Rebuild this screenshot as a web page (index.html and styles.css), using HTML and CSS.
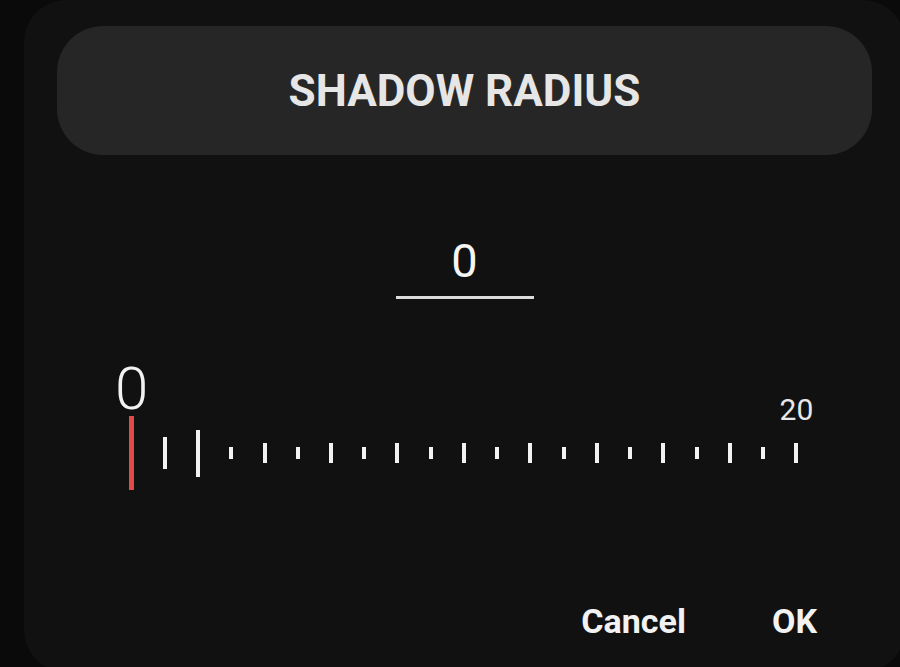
FILE: index.html
```html
<!DOCTYPE html>
<html lang="en">
<head>
  <meta charset="UTF-8" />
  <meta name="viewport" content="width=device-width, initial-scale=1.0" />
  <title>Shadow Radius</title>
  <link rel="stylesheet" href="styles.css">
</head>
<body>

  <div class="dialog">
    <div class="dialog-title">SHADOW RADIUS</div>

    <div class="value-box">
      <div class="value">0</div>
      <div class="value-line"></div>
    </div>

    <div class="ruler">
      <div class="ruler-labels">
        <div class="label label-min">0</div>
        <div class="label label-max">20</div>
      </div>
      <div class="ticks">
        <div class="slot"><span class="tick tick-current"></span></div>
        <div class="slot"><span class="tick tick-near"></span></div>
        <div class="slot"><span class="tick tick-big"></span></div>
        <div class="slot"><span class="tick tick-small"></span></div>
        <div class="slot"><span class="tick tick-mid"></span></div>
        <div class="slot"><span class="tick tick-small"></span></div>
        <div class="slot"><span class="tick tick-mid"></span></div>
        <div class="slot"><span class="tick tick-small"></span></div>
        <div class="slot"><span class="tick tick-mid"></span></div>
        <div class="slot"><span class="tick tick-small"></span></div>
        <div class="slot"><span class="tick tick-mid"></span></div>
        <div class="slot"><span class="tick tick-small"></span></div>
        <div class="slot"><span class="tick tick-mid"></span></div>
        <div class="slot"><span class="tick tick-small"></span></div>
        <div class="slot"><span class="tick tick-mid"></span></div>
        <div class="slot"><span class="tick tick-small"></span></div>
        <div class="slot"><span class="tick tick-mid"></span></div>
        <div class="slot"><span class="tick tick-small"></span></div>
        <div class="slot"><span class="tick tick-mid"></span></div>
        <div class="slot"><span class="tick tick-small"></span></div>
        <div class="slot"><span class="tick tick-mid"></span></div>
      </div>
    </div>

    <div class="dialog-buttons">
      <button class="text-button cancel">Cancel</button>
      <button class="text-button">OK</button>
    </div>
  </div>

</body>
</html>
```

FILE: styles.css
```css
body {
  margin: 0;
  height: 667px;
  overflow: hidden;
  background: #0a0a0a;
  font-family: Roboto, "Noto Sans", "Liberation Sans", sans-serif;
  color: #f2f2f2;
}

.dialog {
  margin-left: 24px;
  width: 881px;
  height: 672px;
  box-sizing: border-box;
  padding: 26px 33px 0;
  background: #111111;
  border-radius: 42px;
}

.dialog-title {
  height: 129px;
  display: flex;
  align-items: center;
  justify-content: center;
  background: #262626;
  border-radius: 46px;
  font-size: 44px;
  font-weight: 700;
  color: #e6e6e6;
}

.value-box {
  margin-top: 82px;
  text-align: center;
}

.value {
  font-size: 47px;
  line-height: 1;
  color: #f5f5f5;
}

.value-line {
  width: 138px;
  height: 3px;
  margin: 12px auto 0;
  background: #dcdcdc;
}

.ruler {
  margin: 60px 0 0 58px;
  width: 698px;
}

.ruler-labels {
  display: flex;
  justify-content: space-between;
  align-items: flex-end;
}

.label {
  width: 33.24px;
  display: flex;
  justify-content: center;
  line-height: 1;
  white-space: nowrap;
}

.label-min {
  font-size: 60px;
  font-weight: 300;
  margin-bottom: -3px;
}

.label-max {
  font-size: 30px;
  color: #e8e8e8;
  margin-bottom: -9px;
}

.ticks {
  display: flex;
  align-items: center;
  height: 74px;
}

.slot {
  flex: 1;
  display: flex;
  justify-content: center;
}

.tick {
  display: block;
  width: 4px;
  background: #f2f2f2;
}

.tick-current {
  width: 5px;
  height: 74px;
  background: #e04b48;
}

.tick-near {
  height: 32px;
}

.tick-big {
  height: 47px;
}

.tick-mid {
  height: 20px;
}

.tick-small {
  height: 12px;
}

.dialog-buttons {
  display: flex;
  justify-content: flex-end;
  margin: 114px -33px 0 0;
  padding-right: 44px;
}

.text-button {
  padding: 0 44px;
  background: none;
  border: none;
  font-family: inherit;
  font-size: 34px;
  font-weight: 700;
  line-height: 1;
  color: #f2f2f2;
  cursor: pointer;
}

.cancel {
  padding-right: 42px;
}
```
